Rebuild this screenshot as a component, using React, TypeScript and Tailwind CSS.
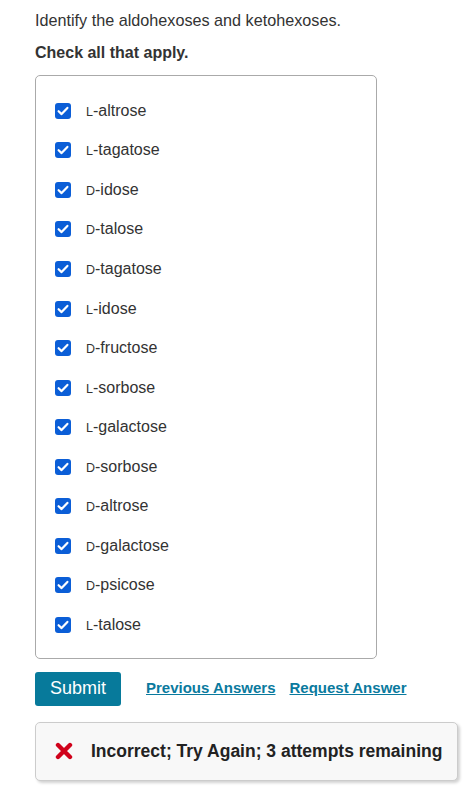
import React from "react";

const options: [string, string][] = [
  ["L", "altrose"],
  ["L", "tagatose"],
  ["D", "idose"],
  ["D", "talose"],
  ["D", "tagatose"],
  ["L", "idose"],
  ["D", "fructose"],
  ["L", "sorbose"],
  ["L", "galactose"],
  ["D", "sorbose"],
  ["D", "altrose"],
  ["D", "galactose"],
  ["D", "psicose"],
  ["L", "talose"],
];

function CheckBox() {
  return (
    <span className="flex h-4 w-4 shrink-0 items-center justify-center rounded-[3px] bg-[#0b5ed7]">
      <svg viewBox="0 0 16 16" className="h-4 w-4">
        <path d="M3.6 8.2 L6.6 11.1 L12.4 4.9" fill="none" stroke="#fff" strokeWidth="2.2" strokeLinecap="round" strokeLinejoin="round" />
      </svg>
    </span>
  );
}

export default function App() {
  return (
    <div className="min-h-screen bg-white pl-[35px] pt-[8px] text-[#333] [font-family:'Liberation_Sans',Arial,sans-serif]">
      <p className="text-[16.2px] leading-6">Identify the aldohexoses and ketohexoses.</p>
      <p className="mt-[9px] text-[16px] font-bold leading-6">Check all that apply.</p>

      {/* options */}
      <div className="mt-[10px] w-[342px] rounded-[5px] border border-[#aaa] px-[19px] pt-[15px] pb-[13px]">
        {options.map(([prefix, name], i) => (
          <label key={i} className="flex h-[39.55px] items-center gap-[15px]">
            <CheckBox />
            <span className="text-[16px]">
              <span className="text-[12.5px]">{prefix}</span>-{name}
            </span>
          </label>
        ))}
      </div>

      {/* actions */}
      <div className="mt-[13px] flex items-center">
        <button className="h-[34px] w-[86px] rounded-[3px] bg-[#077a9b] text-[18px] text-white">Submit</button>
        <a href="#" className="ml-[25px] text-[15px] font-bold text-[#0a7a9e] underline">Previous Answers</a>
        <a href="#" className="ml-[14px] text-[15px] font-bold text-[#0a7a9e] underline">Request Answer</a>
      </div>

      {/* feedback */}
      <div className="mt-[16px] flex h-[59px] w-[423px] items-center rounded-[5px] border border-[#ccc] bg-[#f8f8f8] pl-[19px] shadow-[2px_2px_3px_rgba(0,0,0,0.18)]">
        <svg viewBox="0 0 18 18" className="h-[18px] w-[18px]">
          <path d="M3 3 L15 15 M15 3 L3 15" stroke="#d0021b" strokeWidth="4.4" strokeLinecap="round" />
        </svg>
        <span className="ml-[18px] text-[17.5px] font-bold text-[#222]">Incorrect; Try Again; 3 attempts remaining</span>
      </div>
    </div>
  );
}
